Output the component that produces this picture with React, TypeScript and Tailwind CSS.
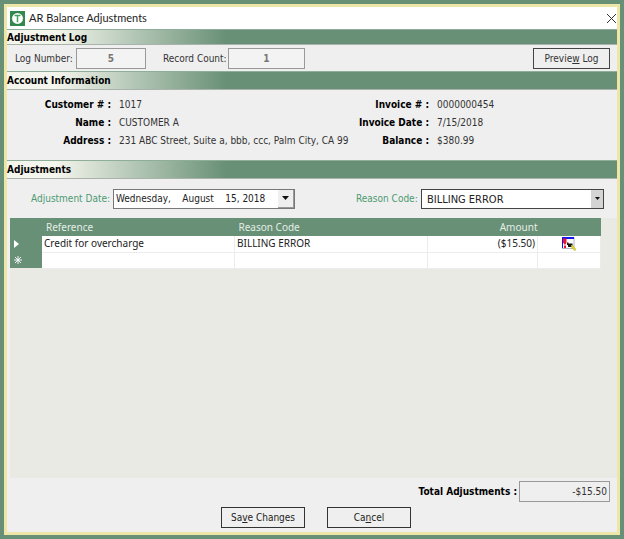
import React from "react";

const account = {
  left: [
    { label: "Customer # :", value: "1017" },
    { label: "Name :", value: "CUSTOMER A" },
    { label: "Address :", value: "231 ABC Street, Suite a, bbb, ccc, Palm City, CA 99" },
  ],
  right: [
    { label: "Invoice # :", value: "0000000454" },
    { label: "Invoice Date :", value: "7/15/2018" },
    { label: "Balance :", value: "$380.99" },
  ],
};

const AppIcon = () => (
  <svg width="15" height="15" viewBox="0 0 15 15" aria-hidden="true">
    <rect width="15" height="15" fill="#2f8a4c" />
    <circle cx="7.5" cy="7.5" r="5.8" fill="#fff" stroke="#1d5c33" strokeWidth="0.5" />
    <path d="M4.5 4.5h6M7.5 4.500v6.800" stroke="#3fa55f" strokeWidth="1.5" fill="none" />
  </svg>
);

const NoteIcon = () => (
  <svg width="14" height="14" viewBox="0 0 14 14" aria-hidden="true">
    <rect x="0.5" y="0.5" width="11.5" height="11" fill="#fff" stroke="#b4b4c4" />
    <path d="M0 0h12v2H0zM0 0h1v11H0z" fill="#1414f0" />
    <path d="M1 1.500h3.500v4l-1 2H2.300L1 5.500zM2 8.500h2v2.500H2z" fill="#f01428" />
    <path d="M5 5.500h1.500v1h4v3.500H6V8H5z" fill="#111" />
    <path d="M9 8l1.500.300L14 12.500l-1.300 1.200L9.500 10z" fill="#e8e020" stroke="#8a8410" strokeWidth="0.4" />
  </svg>
);

const SectionTitle = ({ children, className = "h-[19px]" }: { children: React.ReactNode; className?: string }) => (
  <h2
    className={`flex shrink-0 items-center border-t border-b border-t-[#8fae9a] border-b-[#a9b3ac] bg-linear-to-r/srgb from-[#f4f5ec] from-8% to-[#689076] to-36% font-bold text-black ${className}`}
  >
    {children}
  </h2>
);

const Details = ({ items, className }: { items: { label: string; value: string }[]; className: string }) => (
  <dl className={`grid content-start gap-x-2 leading-[18px] ${className}`}>
    {items.map((item) => (
      <React.Fragment key={item.label}>
        <dt className="text-right font-bold whitespace-nowrap text-black">{item.label}</dt>
        <dd className="whitespace-nowrap">{item.value}</dd>
      </React.Fragment>
    ))}
  </dl>
);

const App = () => {
  return (
    <div className="flex min-h-screen flex-col bg-[#689076] p-1 font-['DejaVu_Sans_Condensed','DejaVu_Sans',sans-serif] text-[10px] text-[#333]">
      <div className="flex flex-1 flex-col border-3 border-[#ede6a6] bg-[#efefef]">
        <header className="flex h-[22px] items-center bg-white pl-[3px]">
          <AppIcon />
          <h1 className="ml-1 flex-1 font-[Lato,sans-serif] text-[11px] leading-4 text-[#222]">AR Balance Adjustments</h1>
          <button type="button" aria-label="Close">
            <svg width="11" height="11" viewBox="0 0 11 11" aria-hidden="true">
              <path d="M1 1l9 9M10 1l-9 9" stroke="#333" strokeWidth="1" />
            </svg>
          </button>
        </header>

        <SectionTitle className="h-4">Adjustment Log</SectionTitle>
        <div className="flex h-[26px] items-center pr-[7px] pl-2">
          <label htmlFor="log-number" className="w-[61px]">
            Log Number:
          </label>
          <input
            id="log-number"
            readOnly
            value="5"
            className="h-[21px] w-[70px] border border-[#999] bg-[#f3f3f3] text-center font-bold text-[#777]"
          />
          <label htmlFor="record-count" className="ml-[17px] w-[65px] whitespace-nowrap">
            Record Count:
          </label>
          <input
            id="record-count"
            readOnly
            value="1"
            className="h-[21px] w-[77px] border border-[#999] bg-[#f3f3f3] text-center font-bold text-[#777]"
          />
          <button type="button" className="ml-auto h-[21px] w-[77px] border border-[#444]">
            Previe<u>w</u> Log
          </button>
        </div>

        <SectionTitle>Account Information</SectionTitle>
        <div className="flex h-[70px] pt-[6px]">
          <Details items={account.left} className="min-w-0 flex-1 grid-cols-[104px_1fr]" />
          <Details items={account.right} className="w-[268px] shrink-0 grid-cols-[80px_1fr]" />
        </div>

        <SectionTitle>Adjustments</SectionTitle>
        <div className="flex h-[39px] items-center justify-between pr-[13px] pl-6 text-[#4c9a72]">
          <div className="flex items-center">
            <label htmlFor="adj-date" className="w-[82px] whitespace-nowrap">
              Adjustment Date:
            </label>
            <div className="flex h-5 w-[182px] border border-[#777] bg-white">
              <input
                id="adj-date"
                defaultValue="Wednesday,    August    15, 2018"
                className="w-full min-w-0 pl-[2px] text-[#222] outline-none"
              />
              <button
                type="button"
                aria-label="Open calendar"
                className="flex w-4 shrink-0 items-center justify-center border-r border-b border-[#999] bg-[#efefef]"
              >
                <svg width="7" height="4" viewBox="0 0 7 4" aria-hidden="true">
                  <path d="M0 0h7L3.500 4z" fill="#111" />
                </svg>
              </button>
            </div>
          </div>
          <div className="flex items-center">
            <label htmlFor="reason" className="w-[65px] whitespace-nowrap">
              Reason Code:
            </label>
            <div className="relative flex">
              <select
                id="reason"
                defaultValue="BILLING ERROR"
                className="h-5 w-[183px] appearance-none border border-[#444] bg-white pt-[2px] pl-[5px] text-[11px] text-[#222]"
              >
                <option>BILLING ERROR</option>
              </select>
              <span className="pointer-events-none absolute inset-y-px right-px flex w-3 items-center justify-center bg-[#d4d4d4]">
                <svg width="5" height="3" viewBox="0 0 5 3" aria-hidden="true">
                  <path d="M0 0h5L2.500 3z" fill="#111" />
                </svg>
              </span>
            </div>
          </div>
        </div>

        <div className="ml-[3px] flex-1 bg-[#e9eae4] pr-4">
          <table className="w-full table-fixed border-collapse font-['Noto_Sans',sans-serif] text-[#222]">
            <colgroup>
              <col className="w-8" />
              <col />
              <col className="w-[193px]" />
              <col className="w-[110px]" />
              <col className="w-[63px]" />
            </colgroup>
            <thead className="bg-[#689076] text-[#e4eee7]">
              <tr className="h-[18px] leading-4">
                <td />
                <th className="p-0 pl-1 text-left font-normal">Reference</th>
                <th className="p-0 pl-1 text-left font-normal">Reason Code</th>
                <th className="p-0 text-right font-normal">Amount</th>
                <td />
              </tr>
            </thead>
            <tbody className="bg-white leading-[15px]">
              <tr className="h-4">
                <td className="bg-[#689076] p-0 pl-1">
                  <svg width="5" height="8" viewBox="0 0 5 8" aria-hidden="true">
                    <path d="M0 0l5 4-5 4z" fill="#fff" />
                  </svg>
                </td>
                <td className="border border-l-0 border-t-0 border-[#ececec] p-0 pl-[2px]">Credit for overcharge</td>
                <td className="border border-t-0 border-[#ececec] p-0 pl-[2px]">BILLING ERROR</td>
                <td className="border border-t-0 border-[#ececec] p-0 pr-[2px] text-right">($15.50)</td>
                <td className="border border-t-0 border-[#ececec] p-0">
                  <button type="button" aria-label="Edit note" className="mx-auto block">
                    <NoteIcon />
                  </button>
                </td>
              </tr>
              <tr className="h-4">
                <td className="bg-[#689076] p-0 pl-1">
                  <svg width="8" height="8" viewBox="0 0 8 8" aria-hidden="true">
                    <path d="M4 0v8M0 4h8M1 1l6 6M7 1L1 7" stroke="#fff" strokeWidth="0.9" />
                  </svg>
                </td>
                <td className="border border-l-0 border-[#ececec]" />
                <td className="border border-[#ececec]" />
                <td className="border border-[#ececec]" />
                <td className="border border-[#ececec]" />
              </tr>
            </tbody>
          </table>
        </div>

        <footer className="pt-[3px] pb-1">
          <div className="flex items-center justify-end pr-[7px]">
            <label htmlFor="total" className="font-bold text-black">
              Total Adjustments :
            </label>
            <input
              id="total"
              readOnly
              value="-$15.50"
              className="ml-[2px] h-[21px] w-[91px] border border-[#999] pr-[2px] text-right"
            />
          </div>
          <div className="mt-[5px] flex justify-center gap-[22px] pl-2">
            <button type="button" className="h-[21px] w-[84px] border border-[#333] text-[#222]">
              Sa<u>v</u>e Changes
            </button>
            <button type="button" className="h-[21px] w-[84px] border border-[#333] text-[#222]">
              Ca<u>n</u>cel
            </button>
          </div>
        </footer>
      </div>
    </div>
  );
};

export default App;
